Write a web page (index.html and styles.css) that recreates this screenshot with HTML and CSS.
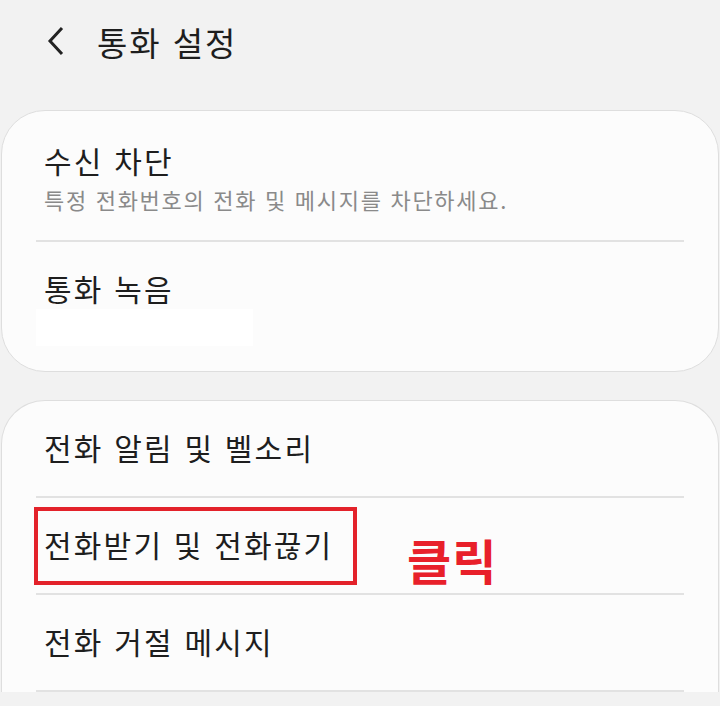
FILE: index.html
```html
<!DOCTYPE html>
<html lang="ko">
<head>
	<meta charset="UTF-8">
	<title>통화 설정</title>
	<link rel="stylesheet" href="styles.css">
</head>
<body>

<div class="top">
	<svg class="back" width="20" height="30" viewBox="0 0 20 30">
		<polyline points="16,2 4,15 16,28" fill="none" stroke="#222" stroke-width="3"/>
	</svg>
	<h1 class="title">통화 설정</h1>
</div>

<div class="card">
	<div class="row tall">
		<div class="name">수신 차단</div>
		<div class="desc">특정 전화번호의 전화 및 메시지를 차단하세요.</div>
	</div>
	<div class="line"></div>
	<div class="row tall">
		<div class="name">통화 녹음</div>
		<div class="blank"></div>
	</div>
</div>

<div class="card last">
	<div class="row">
		<div class="name">전화 알림 및 벨소리</div>
	</div>
	<div class="line"></div>
	<div class="row">
		<div class="mark"><span class="name">전화받기 및 전화끊기</span></div>
		<div class="click">클릭</div>
	</div>
	<div class="line"></div>
	<div class="row">
		<div class="name">전화 거절 메시지</div>
	</div>
	<div class="line"></div>
</div>

</body>
</html>
```

FILE: styles.css
```css
*{
	margin: 0;
	padding: 0;
	box-sizing: border-box;
}
body{
	background-color: #f2f2f2;
	font-family: "Noto Sans CJK KR", "Noto Sans", sans-serif;
	color: #1e1e1e;
	width: 720px;
	height: 706px;
	overflow: hidden;
}
.top{
	height: 110px;
	display: flex;
	align-items: flex-start;
	padding: 24px 0 0 46px;
}
.back{
	margin-top: 2px;
}
.title{
	font-size: 33px;
	font-weight: 400;
	line-height: 36px;
	margin-left: 31px;
	letter-spacing: 1.9px;
}
.card{
	margin: 0 1px;
	background-color: #fcfcfc;
	border: 1px solid #dedede;
	border-radius: 44px;
}
.card.last{
	margin-top: 28px;
	border-bottom: none;
	border-bottom-left-radius: 0;
	border-bottom-right-radius: 0;
}
.row{
	height: 95px;
	display: flex;
	align-items: center;
	padding-left: 42px;
	padding-bottom: 3px;
}
.row.tall{
	height: 129px;
	flex-direction: column;
	align-items: flex-start;
	justify-content: flex-start;
	padding-top: 31px;
	padding-bottom: 0;
}
.row.tall + .line + .row.tall{
	padding-top: 28px;
}
.name{
	font-size: 30px;
	line-height: 36px;
	letter-spacing: 2.2px;
}
.desc{
	font-size: 22px;
	line-height: 28px;
	color: #8a8a8a;
	margin-top: 7px;
	letter-spacing: 1.7px;
}
.blank{
	width: 217px;
	height: 37px;
	background-color: #fff;
	margin-left: -8px;
	margin-top: 3px;
}
.line{
	height: 2px;
	margin: 0 34px;
	background-color: #e2e2e2;
}
.mark{
	border: 4px solid #e3222a;
	width: 323px;
	height: 78px;
	margin-left: -10px;
	margin-top: 3px;
	padding-left: 6px;
	padding-bottom: 3px;
	display: flex;
	align-items: center;
}
.click{
	font-size: 48px;
	font-weight: 700;
	color: #e8202a;
	margin-left: 50px;
	margin-top: 30px;
	letter-spacing: 1px;
}
```
